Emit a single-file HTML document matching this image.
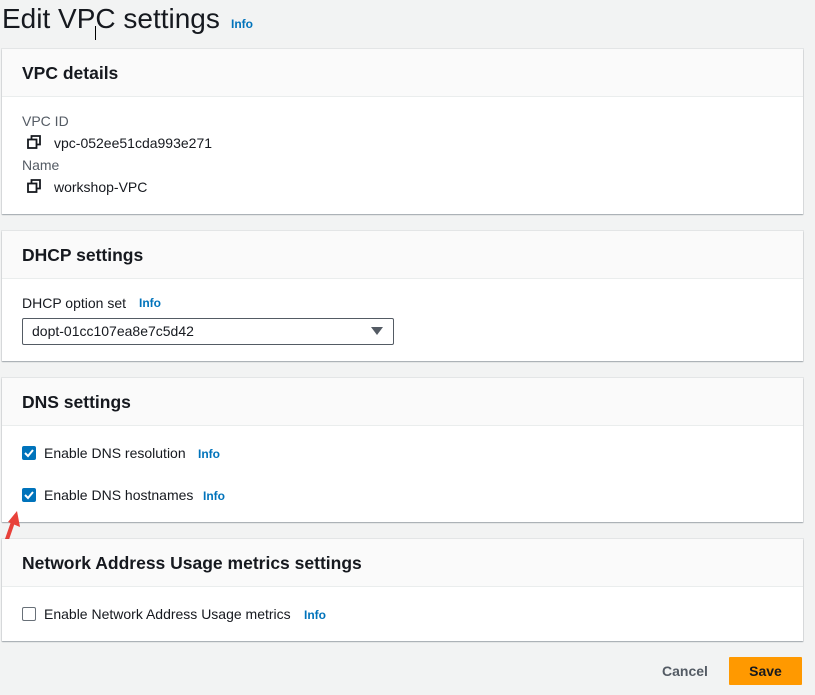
<!DOCTYPE html>
<html><head><meta charset="utf-8"><style>
body{margin:0;width:815px;height:695px;background:#f2f3f3;font-family:"Liberation Sans",sans-serif;color:#16191f;position:relative;overflow:hidden}
.a{position:absolute}
.panel{position:absolute;left:2px;width:801px;background:#fff;box-shadow:0 1px 1px rgba(0,22,37,.3),0 0 0 1px rgba(0,22,37,.06)}
.hd{height:47px;background:#fafafa;border-bottom:1px solid #eaeded;position:relative}
.hd span{position:absolute;left:20px;top:14px;font-weight:bold;font-size:17.5px}
.info{color:#0073bb;font-weight:bold;font-size:12px}
.lbl{font-size:14px}
.cb{position:absolute;width:14px;height:14px;border-radius:2px;background:#0073bb}
.cb svg{position:absolute;left:0;top:0}
.cbo{position:absolute;width:12px;height:12px;border:1px solid #687078;border-radius:2px;background:#fff}
</style></head><body>
<div class="a" style="left:2px;top:3px;font-size:28px;">Edit VPC settings</div>
<div class="a info" style="left:231px;top:17px">Info</div>
<div class="a" style="left:95px;top:26px;width:1px;height:14px;background:#000"></div>

<div class="panel" style="top:49px;height:165px">
 <div class="hd"><span>VPC details</span></div>
 <div class="a lbl" style="left:20px;top:64px;color:#545b64">VPC ID</div>
 <svg class="a" style="left:25px;top:86px" width="14" height="14" viewBox="0 0 14 14"><rect x="1" y="4.5" width="8.5" height="8.5" fill="none" stroke="#16191f" stroke-width="1.8"/><path d="M4.5 4.5V1h8.5v8.5H9.5" fill="none" stroke="#16191f" stroke-width="1.8"/></svg>
 <div class="a lbl" style="left:52px;top:86px">vpc-052ee51cda993e271</div>
 <div class="a lbl" style="left:20px;top:108px;color:#545b64">Name</div>
 <svg class="a" style="left:25px;top:130px" width="14" height="14" viewBox="0 0 14 14"><rect x="1" y="4.5" width="8.5" height="8.5" fill="none" stroke="#16191f" stroke-width="1.8"/><path d="M4.5 4.5V1h8.5v8.5H9.5" fill="none" stroke="#16191f" stroke-width="1.8"/></svg>
 <div class="a lbl" style="left:52px;top:130px">workshop-VPC</div>
</div>

<div class="panel" style="top:231px;height:130px">
 <div class="hd"><span>DHCP settings</span></div>
 <div class="a lbl" style="left:20px;top:64px">DHCP option set</div>
 <div class="a info" style="left:137px;top:65px">Info</div>
 <div class="a" style="left:20px;top:87px;width:370px;height:25px;border:1px solid #545b64;border-radius:2px"></div>
 <div class="a lbl" style="left:30px;top:92px">dopt-01cc107ea8e7c5d42</div>
 <svg class="a" style="left:369px;top:96px" width="12" height="8"><path d="M0 0h12L6 8z" fill="#545b64"/></svg>
</div>

<div class="panel" style="top:378px;height:144px">
 <div class="hd"><span>DNS settings</span></div>
 <div class="cb" style="left:20px;top:68px"><svg width="14" height="14"><path d="M3 7l3 3 5-6" fill="none" stroke="#fff" stroke-width="2"/></svg></div>
 <div class="a lbl" style="left:42px;top:67px">Enable DNS resolution</div>
 <div class="a info" style="left:196px;top:69px">Info</div>
 <div class="cb" style="left:20px;top:110px"><svg width="14" height="14"><path d="M3 7l3 3 5-6" fill="none" stroke="#fff" stroke-width="2"/></svg></div>
 <div class="a lbl" style="left:42px;top:109px">Enable DNS hostnames</div>
 <div class="a info" style="left:201px;top:111px">Info</div>
</div>
<svg class="a" style="left:0;top:508px" width="24" height="40"><path d="M5 37L13 14" stroke="#e8413a" stroke-width="4" stroke-linecap="round"/><path d="M17 3L20 19 8 14z" fill="#e8413a"/></svg>

<div class="panel" style="top:539px;height:102px">
 <div class="hd"><span>Network Address Usage metrics settings</span></div>
 <div class="cbo" style="left:20px;top:68px"></div>
 <div class="a lbl" style="left:42px;top:67px">Enable Network Address Usage metrics</div>
 <div class="a info" style="left:302px;top:69px">Info</div>
</div>

<div class="a" style="left:662px;top:663px;font-weight:bold;font-size:14px;color:#545b64">Cancel</div>
<div class="a" style="left:729px;top:657px;width:73px;height:28px;background:#ff9900;border-radius:1px;font-weight:bold;font-size:14px;text-align:center;line-height:28px">Save</div>
</body></html>
